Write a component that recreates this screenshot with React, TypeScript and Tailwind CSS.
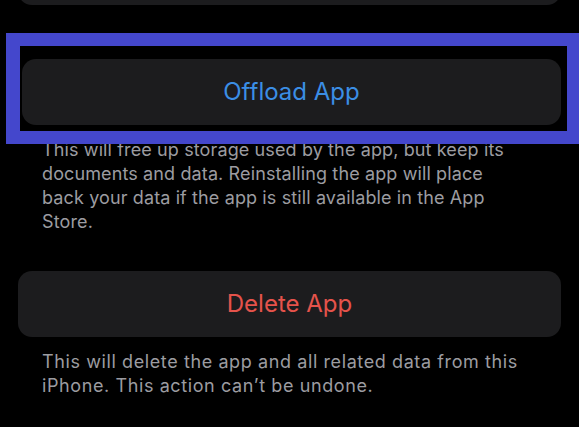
export default function App() {
  return (
    <main className="relative w-[579px] h-[427px] overflow-hidden bg-black font-['Inter','Noto_Sans',sans-serif] antialiased">
      {/* previous group, only the bottom edge shows */}
      <div className="-mt-[55px] mx-[18px] h-[60px] rounded-[14px] bg-[#1c1c1e]" />

      <button className="mt-[54px] ml-[22px] mr-[18px] flex h-[66px] w-[539px] items-center justify-center rounded-[14px] bg-[#1c1c1e] text-[24px] text-[#3b8ee5]">
        Offload App
      </button>
      <p className="mt-[13px] pl-[42px] text-[18px] leading-[24px] tracking-[0.12px] text-[#9c9ca1] whitespace-nowrap">
        This will free up storage used by the app, but keep its
        <br />
        documents and data. Reinstalling the app will place
        <br />
        back your data if the app is still available in the App
        <br />
        Store.
      </p>

      <button className="mt-[37px] mx-[18px] flex h-[66px] w-[543px] items-center justify-center rounded-[14px] bg-[#1c1c1e] text-[24px] text-[#e5534b]">
        Delete App
      </button>
      <p className="mt-[13px] pl-[42px] text-[18px] leading-[24px] tracking-[0.6px] text-[#9c9ca1] whitespace-nowrap">
        This will delete the app and all related data from this
        <br />
        iPhone. This action can’t be undone.
      </p>

      {/* highlight frame drawn over the screenshot */}
      <div className="pointer-events-none absolute left-[6px] top-[33px] h-[111px] w-[573px] border-[#4447cc] border-l-[14px] border-t-[13px] border-r-[12px] border-b-[13px]" />
    </main>
  );
}
